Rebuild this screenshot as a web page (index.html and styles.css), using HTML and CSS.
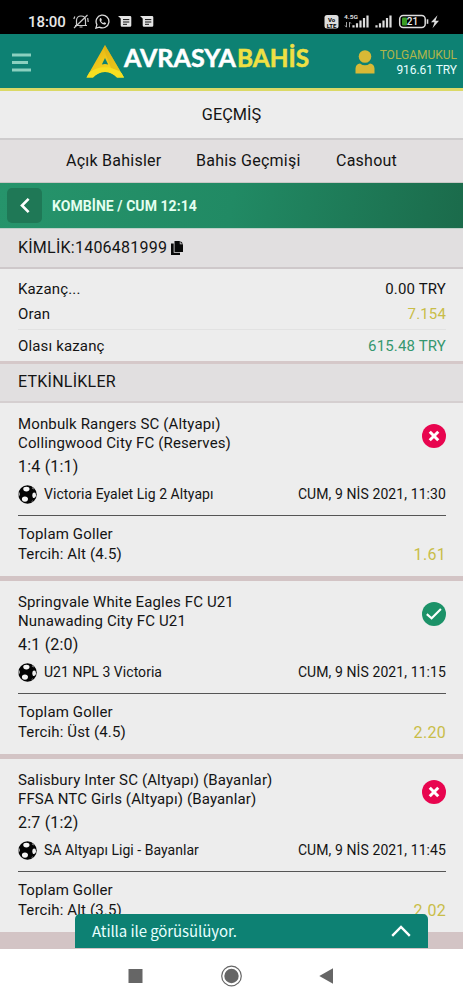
FILE: index.html
```
<!DOCTYPE html>
<html lang="tr">
<head>
<meta charset="utf-8">
<title>Avrasyabahis</title>
<link rel="stylesheet" href="styles.css">
</head>
<body>
<svg class="defs" width="0" height="0">
  <defs>
    <symbol id="ball" viewBox="0 0 20 20">
      <circle cx="10" cy="10" r="9.7" fill="#050505"/>
      <ellipse cx="8.800" cy="4.300" rx="3.300" ry="2.500" fill="#f6f6f6"/>
      <ellipse cx="17" cy="10.800" rx="1.900" ry="3" fill="#f0f0f0"/>
      <ellipse cx="7.300" cy="14.800" rx="3.200" ry="2.700" fill="#f6f6f6"/>
      <path d="M.8 7.200Q2.200 8 2 10.400L.6 12Q0 9.500 .8 7.200Z" fill="#bbb"/>
      <path d="M15 2.300l2 1.700-.6.700-1.900-1.300zM13.600 18.300l2.300-1.500-.6-.7z" fill="#888"/>
    </symbol>
    <symbol id="lost" viewBox="0 0 24 24">
      <circle cx="12" cy="12" r="12" fill="#e8054f"/>
      <path d="M8.800 8.800l6.400 6.400M15.200 8.800l-6.400 6.400" stroke="#fff" stroke-width="3" stroke-linecap="square"/>
    </symbol>
    <symbol id="won" viewBox="0 0 24 24">
      <circle cx="12" cy="12" r="12" fill="#1c9268"/>
      <path d="M4.800 12.100l4.800 4.200 9.300-9.400" fill="none" stroke="#fff" stroke-width="2.100"/>
    </symbol>
    <symbol id="message" viewBox="0 0 14 12">
      <path d="M0 0h12q1.300 0 1.300 1.300v8.200q0 1.300-1.300 1.300H4q-1.300 0-1.300-1.300V2.500Z" fill="#e4e4e4"/>
      <path d="M5 3.600h6.300M5 6h6.300M5 8.300h4" stroke="#111" stroke-width="1"/>
    </symbol>
  </defs>
</svg>
<div class="phone">
  <div class="status">
    <span class="clock">18:00</span>
    <svg class="mute" viewBox="0 0 16 15" fill="none" stroke="#ccc" stroke-width="1.200">
      <path d="M2 11.500h12M3.500 11.500V6.500C3.500 3.500 5.500 2 8 2s4.500 1.500 4.500 4.500v5M6.500 13h3M1 14L14.500 1M.8 5l1-2.500M15.200 8l-.5-4"/>
    </svg>
    <svg class="whatsapp" viewBox="0 0 15 15" fill="none" stroke="#ddd">
      <path d="M.9 14.100l1-3.500A6.400 6.400 0 1 1 4.400 13.100Z" stroke-width="1.300"/>
      <path d="M5 4.200l1-.2.900 2-.8.900c.5 1 1.100 1.600 2.200 2.100l.9-.8 1.900.9c-.1 1.300-1 1.700-2 1.500C6.500 10 4.800 8 4.500 6z" fill="#ddd" stroke="none"/>
    </svg>
    <svg class="msg" viewBox="0 0 14 12"><use href="#message"/></svg>
    <svg class="msg" viewBox="0 0 14 12"><use href="#message"/></svg>
    <svg class="radio" viewBox="0 0 118 18">
      <rect x="0.500" y="2" width="14" height="13.500" rx="2.500" fill="#ddd"/>
      <text x="7.500" y="8.500" class="tiny dark" text-anchor="middle">Vo</text>
      <text x="7.500" y="14.500" class="tiny dark" text-anchor="middle">LTE</text>
      <text x="20" y="6" class="tiny light" textLength="14" lengthAdjust="spacingAndGlyphs">4.5G</text>
      <path d="M22.500 9v5M21 12.500l1.500 1.800M25.500 14.300v-5M25.500 9l1.500 1.600" stroke="#ccc" stroke-width=".8" fill="none"/>
      <path d="M29.500 14.500v-2.200M33 14.500v-4.300M36.500 14.500V7.500M40 14.500V5M43.500 14.500V2.500" stroke="#ddd" stroke-width="2.200"/>
      <path d="M52.500 14.500v-2.200M56 14.500v-4.300M59.500 14.500V7.500M63 14.500V5M66.500 14.500V2.500" stroke="#ddd" stroke-width="2.200"/>
      <rect x="75.700" y="2.500" width="25.500" height="12" rx="3.500" fill="none" stroke="#ddd" stroke-width="1.500"/>
      <rect x="78" y="4.500" width="5" height="8" rx="1" fill="#3a9d23"/>
      <path d="M103.500 6.300v4.500" stroke="#ddd" stroke-width="1.600"/>
      <text x="88.500" y="12.300" class="battery" text-anchor="middle">21</text>
      <path d="M113.500 2.300l-6.500 7h3.500l-2 6 6.500-7.500h-3.500z" fill="#ddd"/>
    </svg>
  </div>

  <header class="header">
    <svg class="menu" viewBox="0 0 20 20"><path d="M0 2.100h19M0 9.600h16M0 17.100h19" stroke="#8ad0bf" stroke-width="3"/></svg>
    <svg class="logo" viewBox="0 0 224 36">
      <defs>
        <linearGradient id="gold" x1="0" y1="0" x2="1" y2="1"><stop offset="0" stop-color="#e0a70e"/><stop offset=".45" stop-color="#efc61b"/><stop offset="1" stop-color="#f8ea29"/></linearGradient>
      </defs>
      <path d="M19 2L0.500 34.500H7C13 27 25 27 31 34.500h7Z M19 15l3.200 6.500q-3.200-1-6.400 0Z" fill="url(#gold)" fill-rule="evenodd"/>
      <path d="M19 2l-1.500 2.700L20 12l5 13q6 2.500 9.500 3.500Z" fill="#d9ae13" opacity=".5"/>
      <path d="M0.500 34.500H7C13 27 25 27 31 34.500h7l-2.500-4.400Q19 19 3.500 29.200Z" fill="#f7df20"/>
      <text x="38" y="24" class="brand white" textLength="112" lengthAdjust="spacingAndGlyphs">AVRASYA</text>
      <text x="151" y="24" class="brand yellow" textLength="72" lengthAdjust="spacingAndGlyphs">BAHİS</text>
    </svg>
    <svg class="user" viewBox="0 0 20 24"><circle cx="10" cy="6.500" r="6.300" fill="#d7b936"/><path d="M.5 23.500v-5Q.8 13.800 5 13.500q5 3.700 10 0 4.200.3 4.500 5v5Z" fill="#d7b936"/></svg>
    <div class="account"><span class="name">TOLGAMUKUL</span><span class="balance">916.61 TRY</span></div>
  </header>

  <h1 class="title">GEÇMİŞ</h1>
  <nav class="tabs"><span class="open">Açık Bahisler</span><span class="history">Bahis Geçmişi</span><span class="cashout">Cashout</span></nav>
  <div class="coupon">
    <span class="back"><svg viewBox="0 0 10 14"><path d="M8 1.500L2.500 7 8 12.500" fill="none" stroke="#fff" stroke-width="2.200"/></svg></span>
    <span class="coupon-name">KOMBİNE / CUM 12:14</span>
  </div>
  <div class="section ident">KİMLİK:1406481999
    <svg class="copy" viewBox="0 0 12 14"><path d="M3.500 0h5.300v3.300H12V11H3.500Z M9.500 0L12 2.600H9.500Z M0 2.500h2.700v9.300H9V14H0Z" fill="#080808"/></svg>
  </div>
  <div class="totals">
    <div class="row"><span>Kazanç...</span><span>0.00 TRY</span></div>
    <div class="row"><span>Oran</span><span class="odd">7.154</span></div>
    <div class="row possible"><span>Olası kazanç</span><span class="win">615.48 TRY</span></div>
  </div>
  <div class="section events">ETKİNLİKLER</div>

  <main>
    <article class="event">
      <div class="teams"><div>Monbulk Rangers SC (Altyapı)<br>Collingwood City FC (Reserves)</div><svg class="result" viewBox="0 0 24 24"><use href="#lost"/></svg></div>
      <div class="score">1:4 (1:1)</div>
      <div class="league"><svg class="ball" viewBox="0 0 20 20"><use href="#ball"/></svg><span>Victoria Eyalet Lig 2 Altyapı</span><time>CUM, 9 NİS 2021, 11:30</time></div>
      <div class="market">Toplam Goller</div>
      <div class="pick"><span>Tercih: Alt (4.5)</span><span class="odd price">1.61</span></div>
    </article>
    <article class="event">
      <div class="teams"><div>Springvale White Eagles FC U21<br>Nunawading City FC U21</div><svg class="result" viewBox="0 0 24 24"><use href="#won"/></svg></div>
      <div class="score">4:1 (2:0)</div>
      <div class="league"><svg class="ball" viewBox="0 0 20 20"><use href="#ball"/></svg><span>U21 NPL 3 Victoria</span><time>CUM, 9 NİS 2021, 11:15</time></div>
      <div class="market">Toplam Goller</div>
      <div class="pick"><span>Tercih: Üst (4.5)</span><span class="odd price">2.20</span></div>
    </article>
    <article class="event">
      <div class="teams"><div>Salisbury Inter SC (Altyapı) (Bayanlar)<br>FFSA NTC Girls (Altyapı) (Bayanlar)</div><svg class="result" viewBox="0 0 24 24"><use href="#lost"/></svg></div>
      <div class="score">2:7 (1:2)</div>
      <div class="league"><svg class="ball" viewBox="0 0 20 20"><use href="#ball"/></svg><span>SA Altyapı Ligi - Bayanlar</span><time>CUM, 9 NİS 2021, 11:45</time></div>
      <div class="market">Toplam Goller</div>
      <div class="pick"><span>Tercih: Alt (3.5)</span><span class="odd price">2.02</span></div>
    </article>
  </main>

  <div class="chat"><span>Atilla ile görüsülüyor.</span><svg viewBox="0 0 20 12"><path d="M1.200 10.800L10 2l8.800 8.800" fill="none" stroke="#fff" stroke-width="2.400"/></svg></div>
  <footer class="navbar">
    <svg viewBox="0 0 22 22"><rect x="4.500" y="4" width="14" height="14" fill="#666"/></svg>
    <svg viewBox="0 0 22 22"><circle cx="11.500" cy="11" r="9.800" fill="none" stroke="#666" stroke-width="1.200"/><circle cx="11.500" cy="11" r="7.200" fill="#666"/></svg>
    <svg viewBox="0 0 22 22"><path d="M3.300 11l13.700-7.700v15.400Z" fill="#666"/></svg>
  </footer>
</div>
</body>
</html>
```

FILE: styles.css
```
* { box-sizing: border-box; }
body { margin: 0; background: #fff; color: #141414; font-family: Roboto, sans-serif; }
svg { display: block; flex: none; }
.defs { position: absolute; }
.phone { position: relative; width: 463px; height: 1004px; display: flex; flex-direction: column; overflow: hidden; }
.phone > * { flex: none; }

.status { height: 34px; background: #000; display: flex; align-items: center; padding: 9px 15px 0 28px; }
.clock { color: #e8e8e8; font-size: 15px; font-weight: 500; width: 45px; letter-spacing: -.05px; }
.mute { width: 16px; height: 15px; }
.whatsapp { width: 15px; height: 15px; margin-left: 6px; }
.msg { width: 14px; height: 12px; margin-left: 8px; }
.radio { width: 118px; height: 18px; margin-left: auto; margin-right: 6px; }
.tiny { font: bold 6px Roboto, sans-serif; }
.tiny.dark { fill: #000; }
.tiny.light { fill: #ddd; }
.battery { font: 500 10px Roboto, sans-serif; fill: #eee; }

.header { height: 57px; background: #0d8173; border-bottom: 3px solid #dbd966; display: flex; align-items: center; padding: 0 6px 0 12px; }
.menu { width: 20px; height: 20px; margin-top: 4px; }
.logo { width: 224px; height: 36px; margin: 0 0 1px 54px; }
.brand { font: 700 24px Lato, sans-serif; stroke-width: .5px; }
.white { fill: #fff; stroke: #fff; }
.yellow { fill: #eee044; stroke: #eee044; }
.user { width: 20px; height: 24px; margin: 1px 0 0 45px; }
.account { margin-left: auto; margin-top: 3px; display: flex; flex-direction: column; align-items: flex-end; font-size: 12px; line-height: 15px; }
.name { color: #b1b54a; }
.balance { color: #e6ffff; letter-spacing: -.05px; }

.title { margin: 0; height: 49px; background: #ededed; border-bottom: 2px solid #cecccd; font-size: 16.3px; font-weight: 400; line-height: 47px; text-align: center; }
.tabs { height: 43px; background: #e2dfe0; border-bottom: 1px solid #c8c8c6; display: flex; font-size: 16px; line-height: 41px; padding-left: 66px; letter-spacing: .24px; }
.open { width: 130px; }
.history { width: 140px; }
.coupon { height: 45px; display: flex; align-items: center; gap: 10px; padding-left: 7px; background: linear-gradient(100deg, #26946b 0%, #218a64 50%, #1b6b4b 100%); }
.back { width: 35px; height: 35px; border-radius: 5px; background: #1f7856; display: flex; align-items: center; justify-content: center; }
.back svg { width: 12px; height: 17px; }
.coupon-name { color: #e4fff0; font-size: 14px; font-weight: 700; letter-spacing: .06px; }
.section { background: #e1dfe0; padding-left: 18px; display: flex; align-items: center; font-size: 16px; letter-spacing: .24px; }
.ident { height: 41px; border-top: 1px solid #bfcfc8; border-bottom: 2px solid #cec8ca; gap: 4px; padding-bottom: 1px; }
.copy { width: 12px; height: 14px; }
.totals { height: 92px; background: #ededed; padding: 8px 17px 0 18px; font-size: 15px; }
.row { display: flex; justify-content: space-between; line-height: 25px; letter-spacing: .15px; }
.possible { border-top: 1px solid #e2e2e2; margin-top: 2px; padding-top: 4px; }
.odd { color: #c9bd48; }
.win { color: #35976f; }
.events { height: 42px; border-top: 3px solid #d5c8c9; border-bottom: 2px solid #d5cfd0; padding-bottom: 2px; }

.event { height: 178px; background: #ededed; border-bottom: 5px solid #d3c4c5; padding: 12px 17px 0 18px; font-size: 15px; }
.teams { height: 41px; display: flex; justify-content: space-between; line-height: 19px; letter-spacing: .14px; }
.result { width: 24px; height: 24px; margin-top: 9px; }
.score { font-size: 16px; line-height: 22px; letter-spacing: .2px; }
.league { height: 38px; border-bottom: 1px solid #555; display: flex; align-items: center; padding-bottom: 5px; font-size: 14px; letter-spacing: .04px; }
.ball { width: 19px; height: 19px; margin-right: 7px; }
.league time { margin-left: auto; letter-spacing: .09px; }
.market { line-height: 20px; padding-top: 8px; letter-spacing: .14px; }
.pick { display: flex; justify-content: space-between; line-height: 21px; letter-spacing: .14px; }
.price { font-size: 16px; letter-spacing: .3px; }
main { height: 546px; background: #d3c4c5; overflow: hidden; }
.chat { position: absolute; left: 75px; top: 914px; width: 353px; height: 34px; background: #0d8173; color: #e8ffff; border-radius: 5px 5px 0 0; display: flex; justify-content: space-between; align-items: center; padding: 0 17px 1px; font: 15px "Noto Sans CJK SC", "Noto Sans", sans-serif; letter-spacing: -.08px; }
.chat svg { width: 20px; height: 12px; }
.navbar { height: 55px; background: #fff; display: flex; gap: 74px; padding: 16px 0 0 124px; }
.navbar svg { width: 22px; height: 22px; }
```
